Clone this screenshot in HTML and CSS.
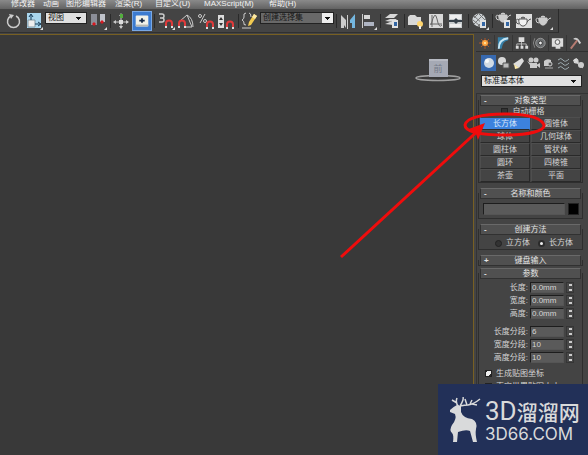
FILE: index.html
```html
<!DOCTYPE html>
<html lang="zh-CN">
<head>
<meta charset="utf-8">
<meta name="viewport" content="width=device-width, initial-scale=1">
<title>标准基本体</title>
<link rel="stylesheet" href="styles.css">
</head>
<body>
<svg class="defs" aria-hidden="true">
  <defs>
    <g id="magnet"><path d="M0 7V3.500a3 3 0 0 1 6 0V7" fill="none" stroke="#e03a3a" stroke-width="2"/><path d="M-1 6h2v2h-2zM5 6h2v2H5z" fill="#ddd"/></g>
    <path id="corner" d="M19 16v3h-3z" fill="#ddd"/>
    <g id="teapot"><path d="M5 9h8q1 5-3 7H8q-4-2-3-7zM7 8q2-2 4 0z"/><path d="M5 10Q2 8 2 11t3 3M13 12q2-3 4-3" fill="none"/></g>
    <g id="sheet"><path d="M10 9h6v8h-6z" fill="#e2e2e2"/><path d="M12 11h3v4h-3z" fill="#3467a5"/></g>
  </defs>
</svg>

<nav class="menu">
  <a href="#">修改器</a><a href="#">动画</a><a href="#">图形编辑器</a><a href="#">渲染(R)</a><a href="#">自定义(U)</a><a href="#">MAXScript(M)</a><a href="#">帮助(H)</a>
</nav>

<header class="toolbar">
  <div class="tools">
    <button aria-label="旋转"><svg viewBox="0 0 20 20"><path d="M7 5a6 6 0 1 0 5 0" fill="none" stroke="#ccc" stroke-width="1.500"/><path d="M5 3l5 1-3 4z" fill="#ccc"/></svg></button>
    <button aria-label="缩放"><svg viewBox="0 0 20 20"><path d="M3 2h14v15H3z" fill="#a9d6ee"/><path d="M4 9h7v7H4z" fill="#eee" stroke="#8297a2"/><path d="M7 9V4M5 6l2-3 2 3M11 13h5M14 11l3 2-3 2" stroke="#153a57" fill="none"/><use href="#corner"/></svg></button>
    <select class="field view-select" aria-label="坐标系"><option>视图</option></select>
    <button aria-label="轴心"><svg viewBox="0 0 20 20"><path d="M3 3h6v11H3z" fill="#8b8e98"/><path d="M12 3h5v8h-5z" fill="#bfc3ca"/><path d="M6 11l2 2-2 2-2-2zM14 9l2 2-2 2-2-2z" fill="#d71920"/><use href="#corner"/></svg></button>
    <i class="sep"></i>
    <button aria-label="操纵"><svg viewBox="0 0 20 20"><path d="M9 4v13M3 11h13" stroke="#ccc"/><path d="M7 5l2-3 2 3zM7 15l2 3 2-3zM4 9l-3 2 3 2zM14 9l3 2-3 2z" fill="#ccc"/><path d="M8 3h3v4H8z" fill="#53ad3e"/><path d="M7 9h4v4H7z" fill="#ddd"/></svg></button>
    <button class="on" aria-label="键盘快捷键"><svg viewBox="0 0 20 20"><rect x="3" y="4" width="14" height="12" rx="1" fill="#f1f1e9"/><path d="M3 14h14v2H3z" fill="#b7b8b4"/><path d="M10 7v5M7 9.500h6" stroke="#172a47" stroke-width="2"/></svg></button>
    <i class="sep"></i>
    <button aria-label="捕捉开关"><svg viewBox="0 0 20 20"><path d="M3 3h3q2 0 2 2T6 7H4h2q2 0 2 2t-2 2H3" fill="none" stroke="#ccc" stroke-width="1.500"/><use href="#magnet" x="10" y="9"/><use href="#corner"/></svg></button>
    <button aria-label="角度捕捉"><svg viewBox="0 0 20 20"><path d="M4 10l7-6 5 12H9M11 4q6 3 6 12" fill="none" stroke="#ccc"/><use href="#magnet" x="3" y="9"/></svg></button>
    <button aria-label="百分比捕捉"><svg viewBox="0 0 20 20"><circle cx="4" cy="5" r="1.500" fill="none" stroke="#ccc"/><circle cx="9" cy="10" r="1.500" fill="none" stroke="#ccc"/><path d="M9 3l-5 9" stroke="#ccc"/><use href="#magnet" x="11" y="10"/></svg></button>
    <button aria-label="微调器捕捉"><svg viewBox="0 0 20 20"><path d="M2 4h6v13H2z" fill="#ddd"/><path d="M3 9l2-3 2 3zM3 12l2 3 2-3z" fill="#333"/><use href="#magnet" x="11" y="10"/></svg></button>
    <i class="sep"></i>
    <button aria-label="命名选择集"><svg viewBox="0 0 20 20"><path d="M6 2Q3 2 4 6q0 2-2 3 2 1 2 3-1 2 2 2M9 2q2 0 2 4M2 17h9" fill="none" stroke="#ccc"/><path d="M14 3l3 2-6 9-3 1 1-4z" fill="#f1c950"/><path d="M14 3l3 2-2 3-3-2z" fill="#fae8a8"/></svg></button>
    <select class="field set-select" aria-label="选择集"><option>创建选择集</option></select>
    <i class="sep"></i>
    <button aria-label="镜像"><svg viewBox="0 0 20 20"><path d="M3 4l5 5v8l-2-3v3H3zM9 4h1v14H9z" fill="#ccc"/><path d="M17 3l-5 6v3h2v5h3z" fill="#74b6df"/></svg></button>
    <button aria-label="对齐"><svg viewBox="0 0 20 20"><path d="M4 3h1v14H4z" fill="#ccc"/><path d="M6 4h6v4H6z" fill="#d6d6d6"/><path d="M6 11h10v4H6z" fill="#aeb4c2"/><use href="#corner"/></svg></button>
    <i class="sep"></i>
    <button aria-label="层"><svg viewBox="0 0 20 20"><path d="M3 7l5-4h8l-4 4zM3 10l5-2h7l-4 3zM3 13l5-2h7l-4 3z" fill="#d8d8d8"/><use href="#sheet"/></svg></button>
    <i class="sep"></i>
    <button aria-label="功能区"><svg viewBox="0 0 20 20"><path d="M2 6l2-2h5l2 2h4v8H2z" fill="#d8d8d8"/><circle cx="14" cy="13" r="3" fill="#ffd56e"/><path d="M13 15h2v3h-2z" fill="#eee"/></svg></button>
    <button aria-label="曲线编辑器"><svg viewBox="0 0 20 20"><path d="M3 3h14v14H3z" fill="#d9d9d9"/><path d="M6 4v12M4 13h12M5 14Q9-2 11 8t5 6" fill="none" stroke="#666"/></svg></button>
    <button aria-label="图解视图"><svg viewBox="0 0 20 20"><path d="M3 3h13v14H3z" fill="#c9cdcf"/><path d="M4 4h11v4H4zM4 13h11v3H4z" fill="#eee"/><path d="M3 10h13" stroke="#364049" stroke-width="2"/><path d="M7 10l3 3 3-3-3-3z" fill="#364049"/></svg></button>
    <i class="sep"></i>
    <button aria-label="材质编辑器"><svg viewBox="0 0 20 20"><circle cx="9" cy="9" r="6.500" fill="#d0d5d8"/><path d="M4 5l10 9M9 3l6 6M3 9l7 6M13 4L4 13M15 8l-7 7M8 3L4 7" stroke="#777"/><use href="#sheet"/><use href="#corner"/></svg></button>
    <i class="sep"></i>
    <button aria-label="渲染设置"><svg viewBox="0 0 20 20"><use href="#teapot" y="-5" fill="#ccc" stroke="#ccc"/><use href="#sheet"/></svg></button>
    <button aria-label="渲染帧窗口"><svg viewBox="0 0 20 20"><path d="M2 3h16v14H2z" fill="#dedede"/><use href="#teapot" y="-1" fill="#f1f1f1" stroke="#555"/></svg></button>
    <button aria-label="渲染产品"><svg viewBox="0 0 20 20"><use href="#teapot" y="-2" fill="#ccc" stroke="#ccc"/><use href="#corner"/></svg></button>
  </div>
</header>

<div class="workspace">
  <main class="viewport">
    <svg class="cube" viewBox="0 0 48 26" role="img" aria-label="视图方位">
      <ellipse cx="24" cy="20" rx="22" ry="2.500" fill="none" stroke="#a0a0a0" stroke-width="1.500"/>
      <path d="M15 1h19v18H15z" fill="#a5a9b4"/><path d="M15 1h19v2H15z" fill="#b7bac3"/>
      <text x="24" y="14">前</text>
    </svg>
  </main>

  <aside class="panel">
    <div class="tabs">
      <button aria-label="创建"><svg viewBox="0 0 18 16"><path d="M9 3v11M3 8h12M5 4l8 8M13 4l-8 8" stroke="#a9562b"/><circle cx="9" cy="8" r="3" fill="#ffa440"/><circle cx="9" cy="8" r="1" fill="#fff1b0"/></svg></button>
      <button aria-label="修改"><svg viewBox="0 0 18 16"><path d="M3 2h11v3q-6 1-7 9H3z" fill="#367fa7"/><path d="M4 14Q4 4 14 3" fill="none" stroke="#c8e7f5" stroke-width="2"/></svg></button>
      <button aria-label="层次"><svg viewBox="0 0 18 16"><path d="M6 2h6v5H6zM3 11h3v3H3zM8 11h3v3H8zM13 11h3v3h-3z" fill="#ddd"/><path d="M9 7v4M4 11V9h10v2" fill="none" stroke="#bbb"/></svg></button>
      <button aria-label="运动"><svg viewBox="0 0 18 16"><circle cx="10" cy="8" r="5" fill="#6b6e70" stroke="#999"/><circle cx="10" cy="8" r="2" fill="#eee" stroke="#333"/><path d="M4 3Q1 8 4 13" fill="none" stroke="#888"/></svg></button>
      <button aria-label="显示"><svg viewBox="0 0 18 16"><path d="M3 3h12v9H3zM7 12h5v2H7z" fill="#ddd"/><circle cx="9" cy="7" r="2.500" fill="#eee" stroke="#555"/></svg></button>
      <button aria-label="工具"><svg viewBox="0 0 18 16"><path d="M4 14l7-9" stroke="#b77c72" stroke-width="2"/><path d="M7 3q4-2 6 2l2 3-2 1-2-4-4-1z" fill="#ccc"/></svg></button>
    </div>
    <div class="kinds">
      <button class="on" aria-label="几何体"><svg viewBox="0 0 15 16"><circle cx="8" cy="8" r="5" fill="#d1dae4"/><circle cx="6" cy="6" r="2" fill="#f7f9fb"/></svg></button>
      <button aria-label="图形"><svg viewBox="0 0 15 16"><circle cx="6" cy="6" r="4" fill="#d7d7d7"/><path d="M7 8h6v5H7z" fill="#bbb" stroke="#555"/></svg></button>
      <button aria-label="灯光"><svg viewBox="0 0 15 16"><path d="M11 3l2 3-5 7-6-4z" fill="#ddd"/><path d="M3 9l5 4-4 1z" fill="#ffecac"/></svg></button>
      <button aria-label="摄影机"><svg viewBox="0 0 15 16"><circle cx="5" cy="5" r="2.500" fill="#ccc"/><circle cx="10" cy="5" r="2.500" fill="#ccc"/><path d="M4 8h7v5H4zM10 10l4-2v5zM1 6l3 2v2z" fill="#ccc"/></svg></button>
      <button aria-label="辅助对象"><svg viewBox="0 0 15 16"><path d="M3 11V6q3-3 7-1v6z" fill="#ccc"/><circle cx="9" cy="9" r="2" fill="#555" stroke="#ccc"/><path d="M4 13h8" stroke="#aaa"/></svg></button>
      <button aria-label="空间扭曲"><svg viewBox="0 0 15 16"><path d="M2 5q3-3 5 0t6-1M2 9q3-3 5 0t6-1M2 13q3-3 5 0t6-1" fill="none" stroke="#9dabb0"/></svg></button>
      <button aria-label="系统"><svg viewBox="0 0 15 16"><circle cx="5" cy="6" r="2.500" fill="#ddd"/><circle cx="10" cy="10" r="3" fill="#ccc"/><path d="M2 5l10 8M5 3l4 8" stroke="#ccc"/></svg></button>
    </div>
    <select class="field category" aria-label="类别"><option>标准基本体</option></select>

    <div class="rollouts">
      <section class="rollout">
        <button class="head"><span>-</span>对象类型</button>
        <label class="autogrid"><input type="checkbox">自动栅格</label>
        <div class="types">
          <button class="on">长方体</button><button>圆锥体</button>
          <button>球体</button><button>几何球体</button>
          <button>圆柱体</button><button>管状体</button>
          <button>圆环</button><button>四棱锥</button>
          <button>茶壶</button><button>平面</button>
        </div>
      </section>

      <section class="rollout">
        <button class="head"><span>-</span>名称和颜色</button>
        <div class="name-row"><input type="text" aria-label="名称"><button class="swatch" aria-label="颜色"></button></div>
      </section>

      <section class="rollout">
        <button class="head"><span>-</span>创建方法</button>
        <div class="method">
          <label><input type="radio" name="method">立方体</label>
          <label><input type="radio" name="method" checked>长方体</label>
        </div>
      </section>

      <section class="rollout closed">
        <button class="head"><span>+</span>键盘输入</button>
      </section>

      <section class="rollout">
        <button class="head"><span>-</span>参数</button>
        <div class="params">
          <div class="param"><label for="len">长度:</label><input id="len" type="text" value="0.0mm"><button class="spin" aria-label="调整长度"></button></div>
          <div class="param"><label for="wid">宽度:</label><input id="wid" type="text" value="0.0mm"><button class="spin" aria-label="调整宽度"></button></div>
          <div class="param"><label for="hei">高度:</label><input id="hei" type="text" value="0.0mm"><button class="spin" aria-label="调整高度"></button></div>
        </div>
        <div class="params">
          <div class="param"><label for="lseg">长度分段:</label><input id="lseg" type="text" value="6"><button class="spin" aria-label="调整长度分段"></button></div>
          <div class="param"><label for="wseg">宽度分段:</label><input id="wseg" type="text" value="10"><button class="spin" aria-label="调整宽度分段"></button></div>
          <div class="param"><label for="hseg">高度分段:</label><input id="hseg" type="text" value="10"><button class="spin" aria-label="调整高度分段"></button></div>
        </div>
        <label class="check"><input type="checkbox" checked>生成贴图坐标</label>
        <label class="check"><input type="checkbox">真实世界贴图大小</label>
      </section>
    </div>
  </aside>
</div>

<svg class="callout" viewBox="0 0 250 160" aria-hidden="true">
  <g fill="none" stroke="#f00c0c" stroke-width="3">
    <path d="M3 147L144 17"/>
    <path d="M206 15C203 7 188 4 166 4 144 4 128 8 127 15c0 7 16 10 40 10 24 0 40-4 39-10z"/>
  </g>
  <path d="M147 13l-7 17-2-6-4-3-6-1z" fill="#f00c0c"/>
</svg>

<div class="brand">
  <svg viewBox="0 0 34 46" aria-hidden="true">
    <path d="M10 8Q6 10 3 13l0 2 5 2q2 5-3 11-3 5 0 8 2 2 1 9h4l1-10q8-3 12-1l3 11h4q-2-8-1-13 2-7-4-10-9-1-11-7l0-6z" fill="#d9dadb"/>
    <path d="M12 10Q8 6 10 1M10 6L5 3M13 9q4-6 3-9M13 9q5-1 8-1 6-1 12-6M20 8l-2-6M25 7l5 1M23 7l2-4" fill="none" stroke="#d9dadb" stroke-width="1.500"/>
  </svg>
  <div class="brand-text">
    <div class="brand-name"><span>3D</span>溜溜网</div>
    <div class="brand-site">3D66.COM</div>
  </div>
</div>
</body>
</html>
```
FILE: styles.css
```css
* { box-sizing: border-box; }

body {
  margin: 0;
  height: 100vh;
  display: flex;
  flex-direction: column;
  position: relative;
  overflow: hidden;
  background: #444;
  color: #d4d4d4;
  font: 8px/12px "Liberation Sans", "Noto Sans CJK SC", sans-serif;
}

button, input, select {
  margin: 0;
  padding: 0;
  border: 0;
  border-radius: 0;
  background: none;
  color: inherit;
  font: inherit;
}

button svg { display: block; width: 100%; height: 100%; }
.defs { position: absolute; width: 0; height: 0; }

/* Menu bar */
.menu {
  flex: none;
  height: 9px;
  padding-left: 11px;
  display: grid;
  grid-template-columns: 32px 23px 49px 40px 49px 65px auto;
  line-height: 8px;
  background: linear-gradient(#8a8a8a, #626262);
}
.menu a { color: #f2f2f2; text-decoration: none; white-space: nowrap; }

/* Main toolbar */
.toolbar { flex: none; background: #444; }
.tools {
  width: max-content;
  height: 24px;
  padding: 0 4px;
  display: flex;
  align-items: center;
  border-right: 1px solid #2b2b2b;
  border-bottom: 1px solid #303030;
}
.tools button { width: 20px; height: 20px; }
.tools button.on { background: #3c7bd0; border: 1px solid #79a8e4; }
.sep { width: 4px; height: 14px; border-right: 1px solid #2a2a2a; margin-right: 1px; margin-left: -1px; }

.field {
  appearance: none;
  height: 12px;
  padding: 0 12px 0 2px;
  border: 1px solid #222;
  color: #161616;
  line-height: 10px;
  background: linear-gradient(#111, #111) right 5px top 4px / 5px 1px no-repeat,
              linear-gradient(#111, #111) right 6px top 5px / 3px 1px no-repeat,
              linear-gradient(#111, #111) right 7px top 6px / 1px 1px no-repeat,
              #e0e0e0;
}
.view-select { width: 42px; margin: 3px 1px 0; align-self: flex-start; }
.set-select {
  width: 74px;
  align-self: flex-start;
  margin-top: 3px;
  background: linear-gradient(#111, #111) right 3px top 4px / 5px 1px no-repeat,
              linear-gradient(#111, #111) right 4px top 5px / 3px 1px no-repeat,
              linear-gradient(#111, #111) right 5px top 6px / 1px 1px no-repeat,
              linear-gradient(#eee, #eee) right / 11px 100% no-repeat,
              #696969;
}

/* Workspace */
.workspace { flex: 1; min-height: 0; display: flex; }
.viewport {
  flex: 1;
  min-width: 0;
  padding: 23px 11px 0 0;
  background: #393939;
  border-top: 1px solid #786022;
  border-right: 1px solid #786022;
  margin-top: 1px;
}
.cube { display: block; width: 48px; height: 26px; margin-left: auto; }
.cube text { font-size: 9px; fill: #747a88; text-anchor: middle; }

/* Command panel */
.panel {
  flex: none;
  width: 114px;
  padding: 2px 0 0 2px;
  display: flex;
  flex-direction: column;
  background: #444;
}
.tabs { display: flex; height: 17px; border-bottom: 1px solid #303030; }
.tabs button { width: 18px; height: 16px; }
.tabs button + button { border-left: 1px solid #363636; }
.kinds { display: flex; padding: 3px 0 0 5px; }
.kinds button { width: 15px; height: 16px; }
.kinds button.on { background: #3769b0; }
.category { width: 101px; margin: 4px 0 6px 5px; flex: none; }

.rollouts {
  flex: 1;
  min-height: 0;
  overflow: hidden;
  padding: 1px 5px 0 1px;
  border-left: 1px solid #343434;
  border-top: 1px solid #343434;
}
.rollout { position: relative; padding: 0 2px 4px; margin-bottom: 5px; }
.rollout::before {
  content: "";
  position: absolute;
  inset: 5px 0 0;
  border: 1px solid #2e2e2e;
  border-top: 0;
  pointer-events: none;
}
.head {
  position: relative;
  display: block;
  width: 100%;
  height: 11px;
  border: 1px solid #313131;
  border-top-color: #696969;
  background: #505050;
  line-height: 9px;
  color: #e4e4e4;
}
.head span { position: absolute; left: 3px; font-weight: bold; }
.rollout.closed { padding-bottom: 0; margin-bottom: 2px; }

input[type="checkbox"], input[type="radio"] {
  appearance: none;
  width: 7px;
  height: 7px;
  background: #333;
  border: 1px solid #222;
}
input[type="radio"] { border-radius: 50%; }
input[type="radio"]:checked { background: #eee; border: 2px solid #2b2b2b; }
.check input:checked {
  background: linear-gradient(135deg, #292929 20%, #eee 20% 80%, #292929 80%);
}

.autogrid {
  display: flex;
  justify-content: center;
  align-items: center;
  gap: 5px;
  height: 11px;
  padding-right: 16px;
}
.types { display: grid; grid-template-columns: 1fr 1fr; column-gap: 1px; }
.types button {
  height: 13px;
  line-height: 10px;
  border: 1px solid #4e4e4e;
  border-bottom-color: #292929;
  border-right-color: #292929;
}
.types .on { background: #3c82de; border-color: #444 #3c82de #292929; color: #d7e6fa; }
.rollout:first-child { padding-bottom: 1px; }

.name-row { display: flex; gap: 3px; padding: 4px 2px 0 3px; }
.name-row input { flex: 1; min-width: 0; }
.name-row input, .param input {
  height: 12px;
  background: #5a5a5a;
  border: 1px solid #1d1d1d;
  border-right-color: #555;
  border-bottom-color: #555;
}
.swatch { width: 11px; height: 12px; background: #000; border: 1px solid #222; }

.method { display: flex; justify-content: flex-end; gap: 8px; padding: 2px 8px 0 0; margin-bottom: -3px; }
.method label { display: flex; align-items: center; gap: 4px; }

.params { padding: 2px 7px 0 0; }
.params + .params { padding-top: 5px; }
.param {
  display: grid;
  grid-template-columns: 1fr 34px 8px;
  column-gap: 2px;
  height: 13px;
  align-items: center;
  text-align: right;
  line-height: 11px;
}
.param input { width: 100%; height: 11px; padding-left: 1px; line-height: 9px; }
.spin {
  width: 8px;
  height: 11px;
  border: 1px solid #353535;
  background: linear-gradient(#ccc, #ccc) center top 1px / 3px 2px no-repeat,
              linear-gradient(#ccc, #ccc) center bottom 1px / 3px 2px no-repeat,
              #484848;
}
.check { display: flex; align-items: center; gap: 4px; height: 13px; padding-left: 5px; white-space: nowrap; }
.params + .check { margin-top: 3px; }

/* Callout over the active object type */
.callout {
  position: absolute;
  top: 110px;
  right: 0;
  width: 250px;
  height: 160px;
  pointer-events: none;
}

/* Brand plate */
.brand {
  position: absolute;
  right: 0;
  bottom: 0;
  padding: 13px 8px 12px 9px;
  display: flex;
  gap: 4px;
  background: #223058;
  color: #d9dadb;
}
.brand svg { width: 34px; height: 46px; }
.brand-text { width: 95px; white-space: nowrap; }
.brand-name {
  display: flex;
  align-items: center;
  font: 500 21px/28px "Noto Sans CJK SC", sans-serif;
}
.brand-name span { font: 26px/28px Roboto, sans-serif; }
.brand-site { font: 17px/18px Inter, sans-serif; }
```
